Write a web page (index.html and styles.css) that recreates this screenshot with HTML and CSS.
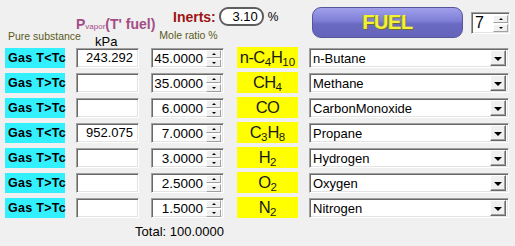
FILE: index.html
```html
<!DOCTYPE html>
<html lang="en">
<head>
    <meta charset="UTF-8">
    <title>Fuel Composition</title>
    <link rel="stylesheet" href="styles.css">
</head>
<body>

    <div class="panel">
        <!-- Header -->
        <div class="grid head">
            <div class="pvapor">P<span class="sub-small">vapor</span>(T' fuel)</div>
            <div class="inerts">
                <span class="inerts-label">Inerts:</span>
                <span class="oval">3.10</span>
                <span class="pct">%</span>
            </div>
            <div class="fuel-area">
                <button class="fuel-btn">FUEL</button>
                <div class="count-box">
                    <span class="count-val">7</span>
                    <div class="spin"><span class="spin-btn up"></span><span class="spin-btn down"></span></div>
                </div>
            </div>

            <div class="col-head pure">Pure substance</div>
            <div class="kpa">kPa</div>
            <div class="col-head mole">Mole ratio %</div>
        </div>

        <div class="grid rows">
            <!-- Row 1 -->
            <div class="state">Gas T&lt;Tc</div>
            <div class="field num">243.292</div>
            <div class="field mole-box"><span class="mole-val">45.0000</span><div class="spin"><span class="spin-btn up"></span><span class="spin-btn down"></span></div></div>
            <div class="formula">n-C<sub>4</sub>H<sub>10</sub></div>
            <div class="field combo"><span>n-Butane</span><span class="arrow"></span></div>

            <!-- Row 2 -->
            <div class="state">Gas T&gt;Tc</div>
            <div class="field num"></div>
            <div class="field mole-box"><span class="mole-val">35.0000</span><div class="spin"><span class="spin-btn up"></span><span class="spin-btn down"></span></div></div>
            <div class="formula">CH<sub>4</sub></div>
            <div class="field combo"><span>Methane</span><span class="arrow"></span></div>

            <!-- Row 3 -->
            <div class="state">Gas T&gt;Tc</div>
            <div class="field num"></div>
            <div class="field mole-box"><span class="mole-val">6.0000</span><div class="spin"><span class="spin-btn up"></span><span class="spin-btn down"></span></div></div>
            <div class="formula">CO</div>
            <div class="field combo"><span>CarbonMonoxide</span><span class="arrow"></span></div>

            <!-- Row 4 -->
            <div class="state">Gas T&lt;Tc</div>
            <div class="field num">952.075</div>
            <div class="field mole-box"><span class="mole-val">7.0000</span><div class="spin"><span class="spin-btn up"></span><span class="spin-btn down"></span></div></div>
            <div class="formula">C<sub>3</sub>H<sub>8</sub></div>
            <div class="field combo"><span>Propane</span><span class="arrow"></span></div>

            <!-- Row 5 -->
            <div class="state">Gas T&gt;Tc</div>
            <div class="field num"></div>
            <div class="field mole-box"><span class="mole-val">3.0000</span><div class="spin"><span class="spin-btn up"></span><span class="spin-btn down"></span></div></div>
            <div class="formula">H<sub>2</sub></div>
            <div class="field combo"><span>Hydrogen</span><span class="arrow"></span></div>

            <!-- Row 6 -->
            <div class="state">Gas T&gt;Tc</div>
            <div class="field num"></div>
            <div class="field mole-box"><span class="mole-val">2.5000</span><div class="spin"><span class="spin-btn up"></span><span class="spin-btn down"></span></div></div>
            <div class="formula">O<sub>2</sub></div>
            <div class="field combo"><span>Oxygen</span><span class="arrow"></span></div>

            <!-- Row 7 -->
            <div class="state">Gas T&gt;Tc</div>
            <div class="field num"></div>
            <div class="field mole-box"><span class="mole-val">1.5000</span><div class="spin"><span class="spin-btn up"></span><span class="spin-btn down"></span></div></div>
            <div class="formula">N<sub>2</sub></div>
            <div class="field combo"><span>Nitrogen</span><span class="arrow"></span></div>

            <div class="total">Total: 100.0000</div>
        </div>
    </div>

</body>
</html>
```

FILE: styles.css
```css
body {
    margin: 0;
    background-color: #f0f0f0;
    font-family: "Liberation Sans", Arial, sans-serif;
    color: #000;
}
.panel {
    padding-left: 5px;
}
.grid {
    display: grid;
    grid-template-columns: 60px 64px 75px 61px 200px;
    column-gap: 11px;
    row-gap: 4px;
}
.head {
    grid-template-rows: 22px 17px;
}
.rows {
    grid-template-rows: repeat(7, 21px) 20px;
    margin-top: 4px;
}
.pvapor {
    grid-column: 2;
    grid-row: 1 / span 2;
    align-self: start;
    white-space: nowrap;
    font-weight: bold;
    font-size: 14px;
    line-height: 16px;
    color: #a34d85;
    margin-top: 16px;
}
.sub-small {
    font-size: 8px;
    font-weight: normal;
}
.inerts {
    grid-column: 3 / span 2;
    grid-row: 1;
    align-self: start;
    display: flex;
    align-items: center;
    margin-top: 7px;
    padding-left: 22px;
    white-space: nowrap;
}
.inerts-label {
    font-weight: bold;
    font-size: 14px;
    color: #9c1414;
}
.oval {
    width: 37px;
    height: 15px;
    margin-left: 3px;
    border: 2px solid #5e5e5e;
    border-radius: 9px;
    background: #fff;
    font-size: 13px;
    line-height: 15px;
    text-align: right;
    padding-right: 4px;
}
.pct {
    font-size: 12px;
    margin-left: 4px;
}
.fuel-area {
    grid-column: 5;
    grid-row: 1 / span 2;
    display: flex;
    align-items: flex-start;
    white-space: nowrap;
}
.fuel-btn {
    flex: none;
    width: 151px;
    height: 31px;
    margin: 7px 0 0 3px;
    border: 1px solid #55559a;
    border-radius: 9px;
    background: linear-gradient(#a0a0ec, #7e7ed6 45%, #6a6ac2 55%, #6464bb);
    color: #f2f232;
    font-family: "Liberation Sans", Arial, sans-serif;
    font-weight: bold;
    font-size: 20px;
    letter-spacing: -0.5px;
    text-shadow: 1px 1px 0 #6b6b40, -1px 0 0 #9a9a6a;
    padding: 0;
}
.count-box {
    flex: none;
    box-sizing: border-box;
    width: 39px;
    height: 22px;
    margin: 12px 0 0 8px;
    display: flex;
    justify-content: space-between;
    background: #fff;
    border: 1px solid;
    border-color: #a0a0a0 #ffffff #ffffff #a0a0a0;
    box-shadow: inset 1px 1px 0 #696969, inset -1px -1px 0 #e3e3e3;
}
.count-val {
    font-size: 16px;
    line-height: 20px;
    padding-left: 3px;
}
.col-head {
    grid-row: 2;
    font-size: 10.5px;
    color: #5b5b1c;
    white-space: nowrap;
}
.pure {
    grid-column: 1;
    align-self: center;
    margin-left: 3px;
    margin-top: 3px;
}
.kpa {
    grid-column: 2;
    grid-row: 2;
    align-self: end;
    font-size: 13px;
    margin: 0 0 -6px 19px;
}
.mole {
    grid-column: 3;
    align-self: center;
    text-align: center;
    margin-top: 1px;
}
.state {
    background-color: #33f0ff;
    font-weight: bold;
    font-size: 12.5px;
    letter-spacing: 0.3px;
    line-height: 20px;
    height: 20px;
    padding-left: 3px;
    margin-top: 1px;
    white-space: nowrap;
}
.field {
    box-sizing: border-box;
    background: #fff;
    border: 1px solid;
    border-color: #a0a0a0 #ffffff #ffffff #a0a0a0;
    box-shadow: inset 1px 1px 0 #696969, inset -1px -1px 0 #e3e3e3;
    height: 20px;
    margin-top: 1px;
}
.num {
    font-size: 13px;
    line-height: 18px;
    text-align: right;
    padding-right: 5px;
    width: 63px;
}
.mole-box {
    width: 73px;
    display: flex;
    justify-content: flex-end;
    align-items: center;
    padding-right: 1px;
}
.mole-val {
    font-size: 13.5px;
    margin-right: 3px;
}
.spin {
    display: flex;
    flex-direction: column;
    justify-content: center;
    gap: 1px;
    padding: 1px 1px 1px 0;
}
.spin-btn {
    box-sizing: border-box;
    display: block;
    width: 15px;
    height: 8px;
    background: #f0f0f0;
    border: 1px solid;
    border-color: #ffffff #a0a0a0 #a0a0a0 #ffffff;
    position: relative;
}
.spin-btn::after {
    content: "";
    position: absolute;
    left: 5px;
    top: 2px;
    border-left: 2px solid transparent;
    border-right: 2px solid transparent;
}
.spin-btn.up::after {
    border-bottom: 2px solid #000;
}
.spin-btn.down::after {
    border-top: 2px solid #000;
}
.formula {
    background-color: #ffff00;
    height: 21px;
    font-size: 16.5px;
    line-height: 21px;
    text-align: center;
    color: #1a1a1a;
    white-space: nowrap;
    letter-spacing: -0.6px;
}
.formula sub {
    font-size: 11.5px;
    vertical-align: -3px;
    line-height: 0;
    letter-spacing: 0;
}
.combo {
    display: flex;
    justify-content: space-between;
    align-items: center;
    font-size: 13px;
    padding: 0 2px 0 3px;
}
.arrow {
    box-sizing: border-box;
    width: 16px;
    height: 16px;
    background: #f0f0f0;
    border: 1px solid;
    border-color: #ffffff #696969 #696969 #ffffff;
    box-shadow: inset -1px -1px 0 #a0a0a0;
    position: relative;
}
.arrow::after {
    content: "";
    position: absolute;
    left: 3px;
    top: 6px;
    border-left: 4px solid transparent;
    border-right: 4px solid transparent;
    border-top: 4px solid #000;
}
.total {
    grid-column: 2 / span 2;
    text-align: right;
    font-size: 13px;
    padding-right: 2px;
    line-height: 20px;
}
```
